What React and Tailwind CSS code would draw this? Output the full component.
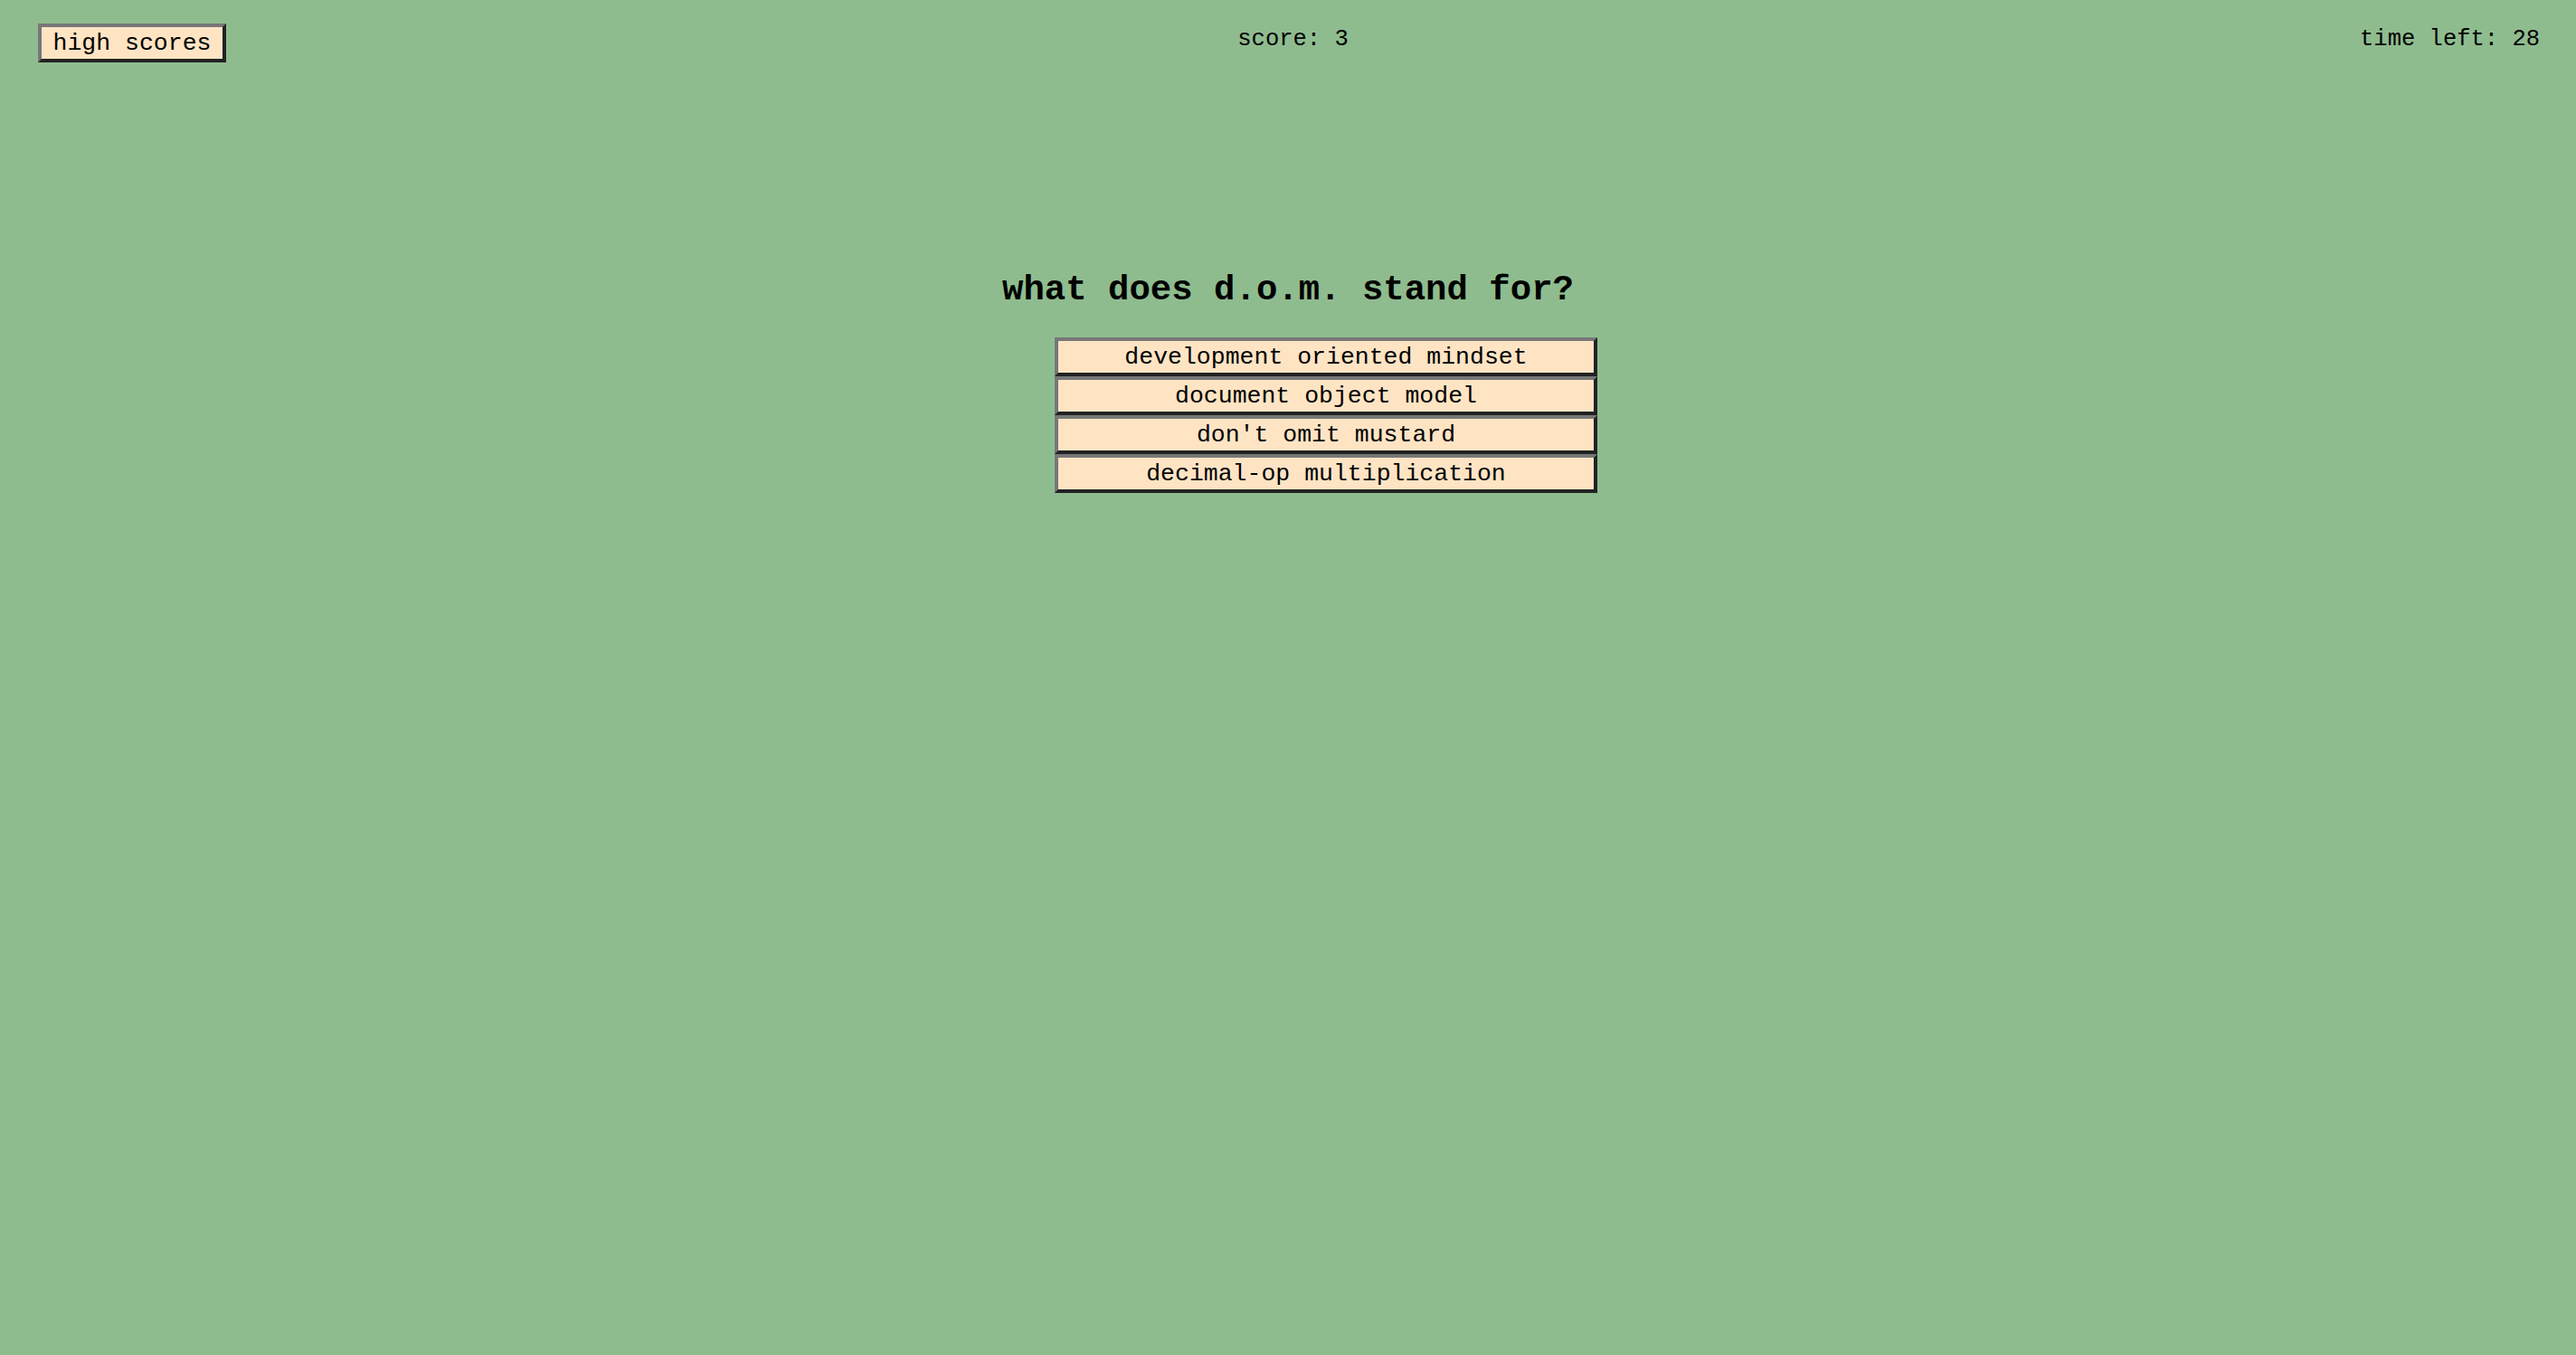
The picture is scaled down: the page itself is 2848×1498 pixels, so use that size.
import React, { useState } from 'react';

const ANSWERS = [
  'development oriented mindset',
  'document object model',
  "don't omit mustard",
  'decimal-op multiplication',
];

const btn =
  'bg-[#ffe4c4] text-black border-4 border-t-[#777] border-l-[#777] border-b-[#222] border-r-[#222] leading-[30px]';

export default function App() {
  const [score] = useState(3);
  const [timeLeft] = useState(28);

  return (
    <div className="min-h-screen w-full bg-[#8fbc8f] text-black font-['Liberation_Mono',monospace]">
      <div className="flex justify-between items-start pl-[42px] pr-[40px] pt-[26px]">
        <button className={`${btn} w-[208px] h-[43px] text-[26.5px]`}>high scores</button>
        <div className="-mt-[1px] text-[25.5px]">score: {score}</div>
        <div className="-mt-[1px] text-[25.5px]">time left: {timeLeft}</div>
      </div>

      <h2 className="mt-[230px] text-center text-[39px] font-bold leading-[44px]">
        what does d.o.m. stand for?
      </h2>

      <ul className="mt-[30px] mx-auto w-[680px] pl-[82px] flex flex-col">
        {ANSWERS.map(a => (
          <li key={a}>
            <button className={`${btn} w-[600px] h-[43px] text-[26.5px]`}>{a}</button>
          </li>
        ))}
      </ul>
    </div>
  );
}
